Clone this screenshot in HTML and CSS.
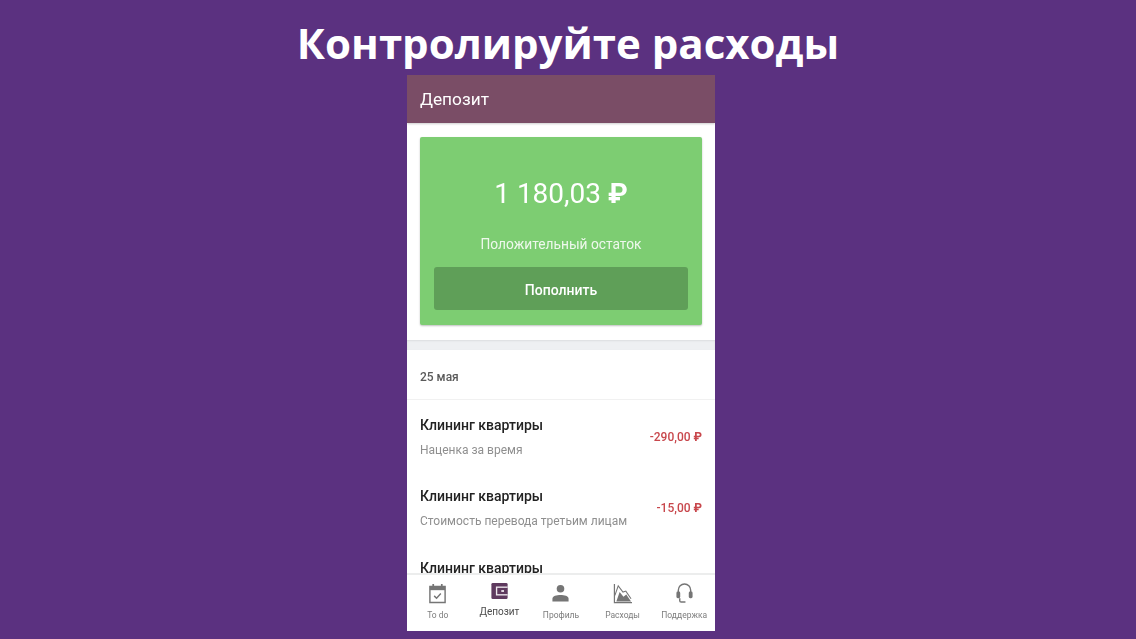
FILE: index.html
```html
<!DOCTYPE html>
<html lang="ru">
<head>
<meta charset="utf-8">
<title>Контролируйте расходы</title>
<link rel="stylesheet" href="styles.css">
</head>
<body>
<h1 class="title">Контролируйте расходы</h1>
<main class="phone">
  <header class="appbar">Депозит</header>
  <div class="content">
    <section class="balance-wrap">
      <div class="balance-card">
        <div class="amount">1 180,03 <span class="rub">₽</span></div>
        <div class="status">Положительный остаток</div>
        <button class="topup">Пополнить</button>
      </div>
    </section>
    <div class="divider"></div>
    <div class="date">25 мая</div>
    <div class="item">
      <div class="item-text"><div class="item-title">Клининг квартиры</div><div class="item-sub">Наценка за время</div></div>
      <div class="item-sum">-290,00 <span class="rub">₽</span></div>
    </div>
    <div class="item">
      <div class="item-text"><div class="item-title">Клининг квартиры</div><div class="item-sub">Стоимость перевода третьим лицам</div></div>
      <div class="item-sum">-15,00 <span class="rub">₽</span></div>
    </div>
    <div class="item item-cut">
      <div class="item-text"><div class="item-title">Клининг квартиры</div></div>
    </div>
  </div>
  <nav class="tabs">
    <div class="tab">
      <svg class="icon" viewBox="0 0 20 22"><path d="M2 3.500h16v17H2z" fill="none" stroke="#757575" stroke-width="1.500"/><path d="M2 3.500h16v4H2z" fill="#757575"/><path d="M5.500 1v4M14.500 1v4" stroke="#757575" stroke-width="1.800"/><path d="M6.500 13.500l2.500 2.500 4.500-5" fill="none" stroke="#757575" stroke-width="1.500"/></svg>
      <span>To do</span>
    </div>
    <div class="tab active">
      <svg class="icon" viewBox="0 0 20 20"><rect x="1" y="1" width="18" height="18" rx="1.500" fill="#5f3a5f"/><path d="M6 5h13v10H6z" fill="#efe9ef"/><path d="M7.500 6.500H19v7H7.500z" fill="#5f3a5f"/><path d="M12 9h3v2h-3z" fill="#efe9ef"/></svg>
      <span>Депозит</span>
    </div>
    <div class="tab">
      <svg class="icon" viewBox="0 0 20 22"><circle cx="10" cy="6" r="4" fill="#757575"/><path d="M1.500 19.500v-3c0-3 4.500-4 8.500-4s8.500 1 8.500 4v3z" fill="#757575"/></svg>
      <span>Профиль</span>
    </div>
    <div class="tab">
      <svg class="icon" viewBox="0 0 20 22"><path d="M1.500 1v19.500H20" fill="none" stroke="#757575" stroke-width="1.300"/><path d="M2 13L5.500 3l5 6.500 3-1 5.500 8" fill="none" stroke="#757575" stroke-width="1.100"/><path d="M3.500 19.500L7 9.500l4 5 3-2.500 5 7.500z" fill="#757575"/></svg>
      <span>Расходы</span>
    </div>
    <div class="tab">
      <svg class="icon" viewBox="0 0 20 22"><path d="M3.500 11V7.500a6.500 6.500 0 0 1 13 0V11" fill="none" stroke="#757575" stroke-width="1.500"/><rect x="1.500" y="9" width="4" height="7" rx="1.500" fill="#757575"/><rect x="14.500" y="9" width="4" height="7" rx="1.500" fill="#757575"/><path d="M5 16v2.500q0 1.500 1.500 1.500H11" fill="none" stroke="#757575" stroke-width="1.500"/></svg>
      <span>Поддержка</span>
    </div>
  </nav>
</main>
</body>
</html>
```
FILE: styles.css
```css
* { box-sizing: border-box; }
html, body { height: 100%; }
body {
  margin: 0;
  background: #5b3180;
  display: flex;
  flex-direction: column;
  align-items: center;
  overflow: hidden;
  font-family: Roboto, "Liberation Sans", sans-serif;
}
.title {
  margin: 0;
  height: 75px;
  padding-top: 11px;
  color: #fff;
  font-family: "Open Sans", "Noto Sans", sans-serif;
  font-size: 42px;
  line-height: 63px;
  font-weight: 700;
  white-space: nowrap;
}
.phone {
  width: 308px;
  height: 556px;
  margin-right: 14px;
  background: #fff;
  display: flex;
  flex-direction: column;
  overflow: hidden;
  filter: blur(.3px);
}
.appbar {
  flex: none;
  height: 48px;
  background: #7a4d66;
  color: #fff;
  font-size: 17.250px;
  line-height: 48px;
  padding-left: 13px;
  box-shadow: 0 1px 2px rgba(0,0,0,.2);
}
.content { flex: 1; min-height: 0; overflow: hidden; }
.balance-wrap { padding: 14px 13px 15px; }
.balance-card {
  height: 188px;
  background: #7dcd72;
  border-radius: 2px;
  box-shadow: 0 1px 2px rgba(0,0,0,.25);
  padding: 0 14px;
  color: #fff;
  text-align: center;
  display: flex;
  flex-direction: column;
}
.amount { font-size: 28px; line-height: 36px; margin-top: 39px; }
.rub { font-weight: 700; }
.status { font-size: 13.750px; line-height: 20px; margin-top: 22px; color: #eef8ec; }
.topup {
  margin-top: 13px;
  height: 43px;
  flex: none;
  border: 0;
  border-radius: 3px;
  background: #5f9f58;
  color: #fff;
  padding-top: 3px;
  font: 500 14px Roboto, sans-serif;
}
.divider {
  height: 10px;
  background: #eef0f2;
  box-shadow: inset 0 1px 2px rgba(0,0,0,.08);
}
.date {
  height: 50px;
  padding-left: 13px;
  font-size: 12px;
  font-weight: 500;
  line-height: 54px;
  color: #5a5a5a;
  border-bottom: 1px solid #f1f1f1;
}
.item {
  height: 71px;
  padding: 14px 13px 0;
  display: flex;
  justify-content: space-between;
  align-items: flex-start;
}
.item-cut { padding-top: 15px; }
.item-title { font-size: 14px; font-weight: 500; line-height: 22px; color: #222; }
.item-sub { font-size: 12px; line-height: 18px; margin-top: 5px; color: #8f8f8f; }
.item-sum { font-size: 12px; font-weight: 500; color: #c8474c; margin-top: 15px; line-height: 16px; }
.tabs {
  flex: none;
  height: 58px;
  background: #fff;
  border-top: 2px solid #eceded;
  display: flex;
}
.tab {
  flex: 1;
  display: flex;
  flex-direction: column;
  align-items: center;
  font-size: 8.500px;
  color: #7d7d7d;
  padding-top: 8px;
}
.tab .icon { width: 19px; height: 21px; flex: none; }
.tab span { margin-top: 5px; line-height: 12px; white-space: nowrap; }
.tab.active { color: #4c4c4c; font-size: 10px; padding-top: 7px; }
.tab.active .icon { height: 18px; }
.tab.active span { margin-top: 6px; }
```
